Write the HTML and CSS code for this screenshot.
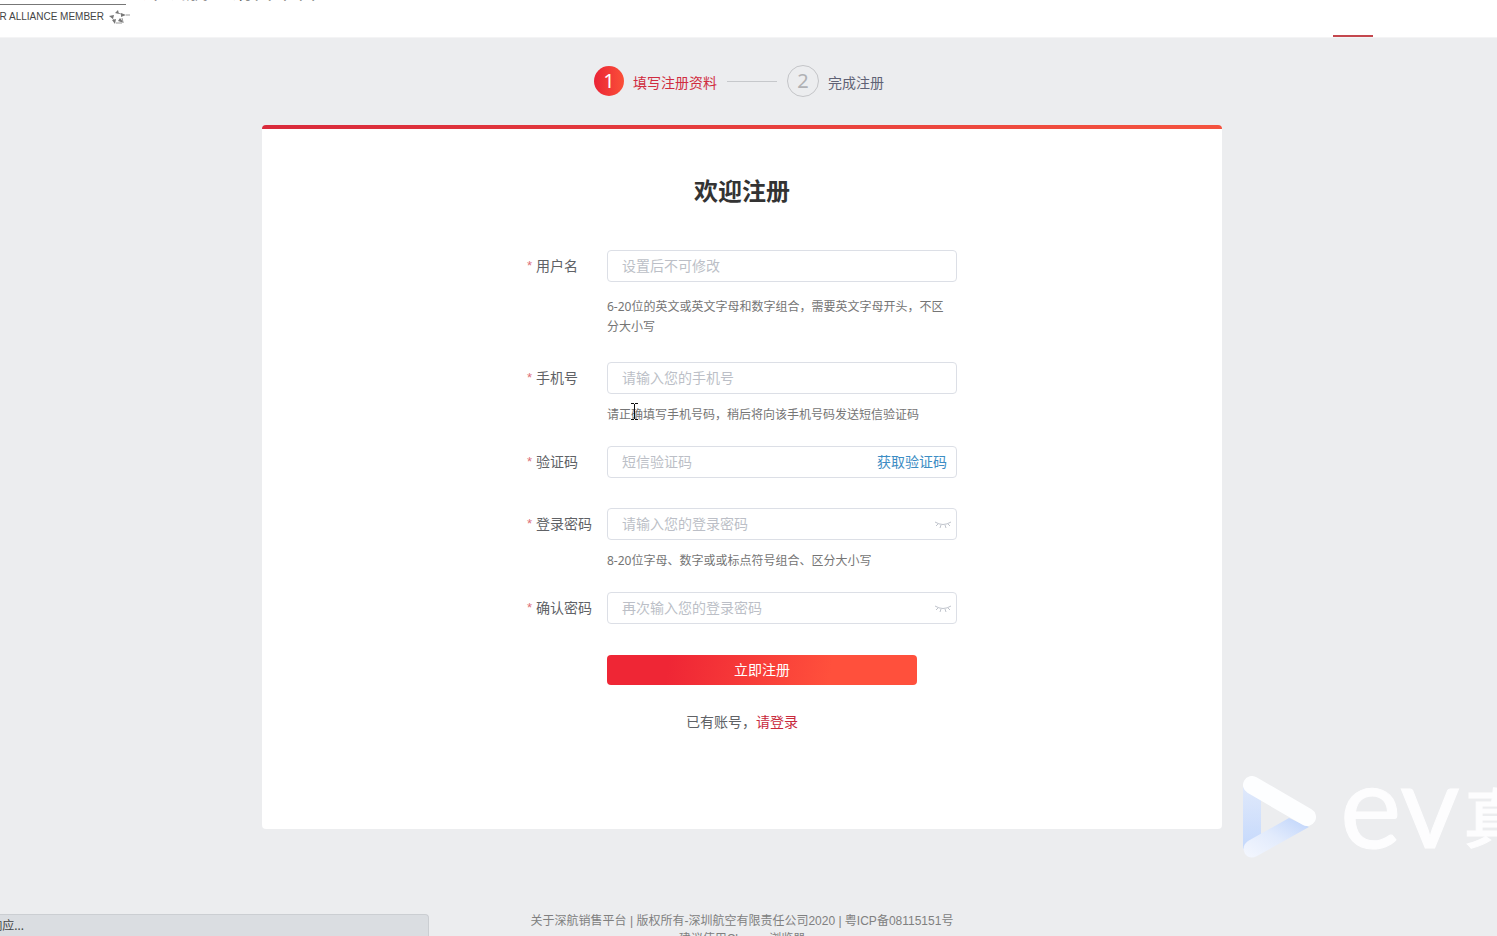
FILE: index.html
```
<!DOCTYPE html>
<html lang="zh-CN">
<head>
<meta charset="utf-8">
<title>欢迎注册</title>
<link rel="stylesheet" href="styles.css">
</head>
<body>
<header class="header">
  <div class="brand">
    <div class="alliance">
      <span class="alliance-clip"><span>A STAR ALLIANCE MEMBER</span></span>
      <svg class="alliance-star" viewBox="0 0 22 16" aria-hidden="true">
        <path d="M6 4l3-3 1 4zM12 4l5 2-5 2zM11 9l4 5-6-2zM7 10l-1 5-3-4zM5 6l-5 1 4 3z" fill="#777"/>
        <path d="M9 4l3 1M13 9l1 4M7 14l6 0M3 9l2 2M17 6h4" stroke="#999" fill="none"/>
      </svg>
    </div>
    <div class="site-name">深圳航空销售平台</div>
  </div>
  <span class="nav-active"></span>
</header>

<main class="page">
  <ol class="steps">
    <li class="step step-current"><span class="step-num">1</span><span class="step-text">填写注册资料</span></li>
    <li class="step-line" aria-hidden="true"></li>
    <li class="step"><span class="step-num">2</span><span class="step-text">完成注册</span></li>
  </ol>

  <section class="card">
    <h1 class="title">欢迎注册</h1>
    <form class="form">
      <div class="item item-hinted">
        <label class="label" for="user">用户名</label>
        <div class="field"><input class="input" id="user" type="text" placeholder="设置后不可修改"></div>
        <p class="hint hint-long">6-20位的英文或英文字母和数字组合，需要英文字母开头，不区分大小写</p>
      </div>
      <div class="item item-hinted">
        <label class="label" for="phone">手机号</label>
        <div class="field"><input class="input" id="phone" type="tel" placeholder="请输入您的手机号"></div>
        <p class="hint">请正确填写手机号码，稍后将向该手机号码发送短信验证码
          <svg class="cursor" viewBox="0 0 9 17" aria-hidden="true"><path d="M1 .5h3M5 .5h3M4.500 1v15M1 16.500h3M5 16.500h3" stroke="#111" fill="none"/></svg>
        </p>
      </div>
      <div class="item">
        <label class="label" for="code">验证码</label>
        <div class="field"><input class="input" id="code" type="text" placeholder="短信验证码"><button class="get-code" type="button">获取验证码</button></div>
      </div>
      <div class="item item-hinted">
        <label class="label" for="pwd">登录密码</label>
        <div class="field"><input class="input" id="pwd" type="password" placeholder="请输入您的登录密码"><button class="eye" type="button" aria-label="显示密码"><svg viewBox="0 0 18 10"><path d="M1 3q8 5 16 0M4 5l-2 2M7 6L6 9M11 6l1 3M14 5l2 2"/></svg></button></div>
        <p class="hint">8-20位字母、数字或或标点符号组合、区分大小写</p>
      </div>
      <div class="item">
        <label class="label" for="pwd2">确认密码</label>
        <div class="field"><input class="input" id="pwd2" type="password" placeholder="再次输入您的登录密码"><button class="eye" type="button" aria-label="显示密码"><svg viewBox="0 0 18 10"><path d="M1 3q8 5 16 0M4 5l-2 2M7 6L6 9M11 6l1 3M14 5l2 2"/></svg></button></div>
      </div>
      <button class="submit" type="submit">立即注册</button>
    </form>
    <p class="login">已有账号，<a href="#login">请登录</a></p>
  </section>
</main>

<footer class="footer">
  <p>关于深航销售平台 | 版权所有-深圳航空有限责任公司2020 | 粤ICP备08115151号</p>
  <p>建议使用Chrome浏览器</p>
</footer>

<div class="status"><span class="status-clip"><span>正在等待响应...</span></span></div>

<div class="watermark">
  <svg class="watermark-logo" viewBox="0 0 73 83" aria-hidden="true">
    <defs>
      <linearGradient id="side" x1="0" y1="0" x2="0" y2="1"><stop offset="0" stop-color="#e0e9fb"/><stop offset="1" stop-color="#c5d9fc"/></linearGradient>
      <linearGradient id="base" x1="0" y1="1" x2="1" y2="0"><stop offset="0" stop-color="#f4f7fe"/><stop offset=".5" stop-color="#e2ebfc"/><stop offset="1" stop-color="#bdd3fb"/></linearGradient>
    </defs>
    <path d="M0 10h18v50L0 73z" fill="url(#side)"/>
    <path d="M46 42L66 51L14 80Q7 84 2 78Q-2 70 5 65z" fill="url(#base)"/>
    <path d="M9 9L64 41" stroke="#fdfeff" stroke-width="18" stroke-linecap="round"/>
  </svg>
  <span class="watermark-ev">ev</span><span class="watermark-cn">真</span>
</div>
</body>
</html>
```
FILE: styles.css
```
* { box-sizing: border-box; }
body {
  margin: 0;
  height: 100vh;
  overflow: hidden;
  position: relative;
  background: #ecedef;
  color: #606266;
  font: 14px/20px "Noto Sans", "Noto Sans CJK SC", sans-serif;
}
h1, p, ol { margin: 0; padding: 0; }
button { border: 0; padding: 0; background: none; font: inherit; cursor: pointer; }
a { color: #c8293c; text-decoration: none; }

.header {
  height: 38px;
  display: flex;
  justify-content: space-between;
  align-items: flex-end;
  overflow: hidden;
  padding-right: 124px;
  background: #fff;
  border-bottom: 1px solid #f4f4f5;
}
.brand { display: flex; align-self: flex-start; }
.alliance {
  width: 130px;
  margin-top: 4px;
  display: flex;
  align-items: center;
  gap: 5px;
  height: 25px;
  background: linear-gradient(#777, #777) 0 0 / 126px 1px no-repeat;
}
.alliance-clip, .status-clip {
  display: flex;
  justify-content: flex-end;
  overflow: hidden;
  white-space: nowrap;
  flex: none;
}
.alliance-clip { width: 104px; font: 10px/18px "Liberation Sans", sans-serif; color: #444; }
.alliance-star { width: 22px; height: 16px; flex: none; }
.site-name { margin: -27px 0 0 12px; color: #333; font-size: 22px; line-height: 32px; white-space: nowrap; }
.nav-active { width: 40px; height: 2px; background: #c4474e; }

.page { padding: 27px 13px 0 0; }
.steps {
  display: flex;
  justify-content: center;
  align-items: center;
  gap: 10px;
  padding-right: 6px;
  height: 32px;
  list-style: none;
}
.step { display: flex; align-items: center; gap: 9px; color: #5f6275; }
.step-text { padding-top: 3px; }
.step-num {
  width: 32px;
  height: 32px;
  border: 1px solid #c4c5c8;
  border-radius: 50%;
  color: #b0b1b4;
  font-size: 20px;
  line-height: 30px;
  text-align: center;
}
.step-current { color: #d02c40; }
.step-current .step-num {
  width: 30px;
  height: 30px;
  border: 0;
  color: #fff;
  background: linear-gradient(90deg, #ea2436, #fb5038);
}
.step-line { width: 50px; height: 1px; background: #c6c8cb; }

.card {
  max-width: 960px;
  margin: 28px auto 0;
  padding: 50px 0 97px;
  border-radius: 4px;
  overflow: hidden;
  background: linear-gradient(90deg, #d92a3b, #f4533f) 0 0 / 100% 4px no-repeat, #fff;
}
.title { color: #333; font-size: 24px; line-height: 32px; text-align: center; }
.form { width: 430px; max-width: 100%; margin: 43px auto 0; }
.item { display: grid; grid-template-columns: 80px 1fr; margin-bottom: 30px; }
.item-hinted { margin-bottom: 21px; }
.label { display: flex; gap: 4px; line-height: 32px; color: #606266; }
.label::before { content: "*"; color: #dc7078; font-family: "Liberation Sans", sans-serif; font-size: 13px; }
.field { position: relative; }
.input {
  width: 100%;
  height: 32px;
  display: block;
  padding: 0 15px 2px 14px;
  border: 1px solid #dcdfe6;
  border-radius: 4px;
  background: #fff;
  color: #606266;
  font: inherit;
  outline: 0;
}
.input::placeholder { color: #bcbfc7; opacity: 1; }
.hint { grid-column: 2; position: relative; margin-top: 11px; font-size: 12px; line-height: 20px; color: #757575; }
.hint-long { padding: 4px 8px 4px 0; }
.get-code { position: absolute; right: 10px; top: 0; height: 32px; color: #3d8dc4; }
.eye { position: absolute; right: 5px; top: 0; width: 18px; height: 32px; display: flex; align-items: center; }
.eye svg { width: 18px; height: 10px; fill: none; stroke: #c0c4cc; }
.cursor { position: absolute; left: 23px; top: -2px; width: 9px; height: 17px; }
.submit {
  display: block;
  width: 310px;
  height: 30px;
  margin: 31px 0 0 80px;
  border-radius: 4px;
  background: linear-gradient(100deg, #ef2635 20%, #ff503c 72%);
  color: #fff;
}
.login { margin-top: 27px; text-align: center; }

.footer {
  padding: 83px 13px 0 0;
  text-align: center;
  color: #808080;
  font: 12px/18px "Liberation Sans", "Noto Sans CJK SC", sans-serif;
}
.status {
  position: absolute;
  left: 0;
  bottom: 0;
  width: 429px;
  height: 22px;
  border: 1px solid #cbced2;
  border-width: 1px 1px 0 0;
  border-top-right-radius: 4px;
  background: #dadde1;
  color: #444;
  font-size: 12px;
  line-height: 22px;
}
.status-clip { width: 24px; }
.watermark {
  position: absolute;
  left: 1243px;
  top: 776px;
  right: 0;
  height: 84px;
  display: flex;
  overflow: hidden;
  color: #fdfdfe;
  white-space: nowrap;
}
.watermark-logo { width: 73px; height: 83px; flex: none; }
.watermark-ev { margin-left: 24px; font: 116px/56px Lato, sans-serif; -webkit-text-stroke: 1px #fdfdfe; }
.watermark-cn { margin-left: 4px; font: 500 64px/76px "Noto Sans CJK SC", sans-serif; -webkit-text-stroke: 1px #fdfdfe; }
```
